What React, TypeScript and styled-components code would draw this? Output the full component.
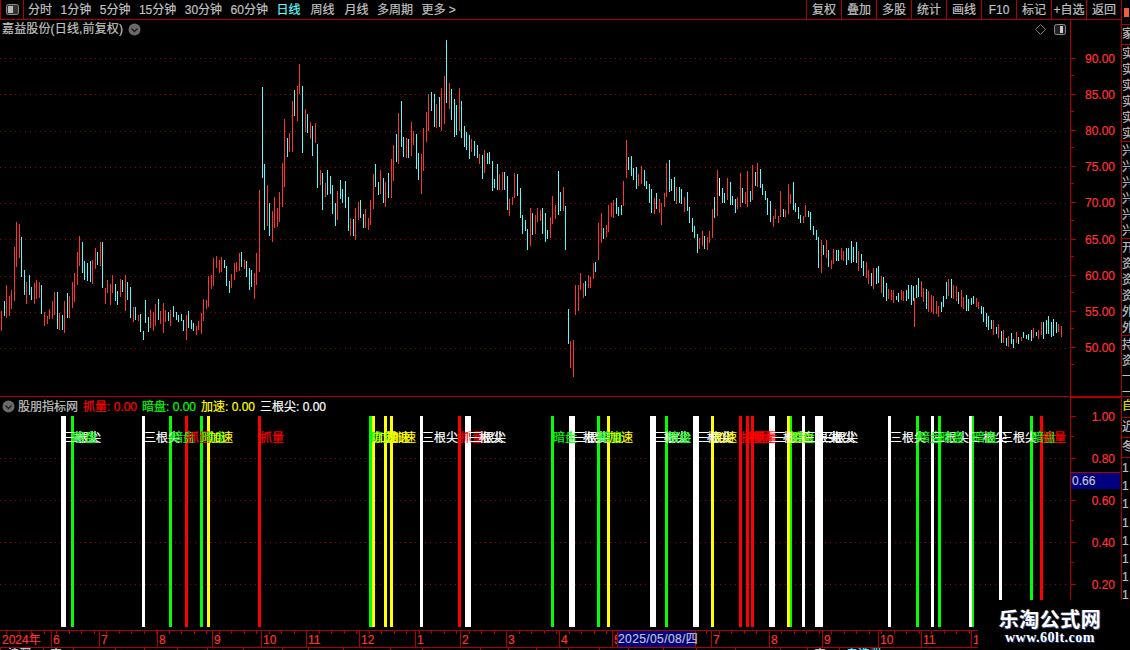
import React from "react";
import styled, { createGlobalStyle } from "styled-components";

const RED = "#ff3232";
const LINE = "#b00000";
const GRAY = "#c0c0c0";
const SANS = `"Liberation Sans", "Noto Sans CJK SC", sans-serif`;

const Global = createGlobalStyle`
  html, body { margin: 0; padding: 0; background: #000; overflow: hidden; }
  #root { width: 1130px; height: 650px; }
`;

const Z10 = "r4,303,363 c13,273,318 r19,225,324 r28,258,318 r34,240,297 r43,111,273 r49,36,171 r58,42,144 c64,81,201 c73,180,255 r79,216,282 c88,195,255 c94,231,270 r103,219,282 r109,210,267 r118,216,264 c124,225,312 r133,306,348 r142,318,342 r148,297,327 r157,273,327 r163,246,315 c172,246,357 r178,309,360 c187,315,360 r193,273,369 c202,249,324 r208,258,324 r217,216,294 r223,189,276 r232,126,225 r238,78,168 c247,96,189 c253,153,210 c262,159,213 c271,153,216 r277,150,222 r286,114,177 c292,126,165 r301,96,168 c307,96,234 r316,234,282 r322,210,249 r331,222,285 r337,195,249 c346,222,273 c352,243,285 r361,207,261 c367,210,246 r376,195,303 c382,216,270 c391,231,324 r400,291,336 c406,291,330 r415,315,333 c421,312,366 c430,363,390 c436,270,339 c445,321,366 r451,300,354 r460,306,363 r466,282,348 c475,267,330 r481,303,342 r490,279,369 r496,300,336 c505,306,333 r511,300,348 c520,288,321 c529,306,330 c535,315,336 c544,312,333 c550,330,363 r559,315,390 c565,303,354 c574,330,357 c580,339,363 r589,348,375 r595,333,360 r604,309,372 r610,267,333 r619,270,297 r625,198,291 r634,195,237 r640,144,228 r649,138,174 r658,150,189 r664,141,186 c673,150,174 c679,168,228 c688,213,249 r694,192,234 r703,159,210 r709,156,186 r718,129,183 c724,126,171 r733,150,177 c739,153,201 c748,174,240 c754,180,231 r763,189,267 r769,129,225 r778,-60,186";
const Z12 = "c22,156,429 c28,387,585 r37,450,573 c43,504,603 r52,528,621 r58,486,579 r67,519,576 r73,471,561 r82,384,516 r88,252,456 c97,309,366 r103,294,351 r112,198,351 c118,165,243 r127,153,258 r133,87,177 c142,153,354 r151,222,291 c157,237,294 r166,261,312 c172,273,363 r181,264,324 c187,327,459 r196,405,450 c202,414,525 r211,444,486 c217,405,480 c226,423,477 c232,450,537 c241,504,573 r247,468,555 c256,435,492 c262,462,504 c271,438,519 c280,486,588 r286,549,603 c295,552,603 r301,519,615 r310,501,555 c316,495,549 c325,537,579 r331,522,579 r340,549,585 r346,495,570 r355,417,522 c361,387,456 c370,441,480 r376,405,477 c385,429,504 r391,441,516 c400,414,489 r409,372,489 r415,330,438 c424,297,381 r430,234,387 c439,198,336 c445,306,366 r454,309,369 c460,312,369 r469,261,363 r475,288,330 c484,297,402 c490,354,435 r499,357,477 r505,279,408 r514,231,321 r520,177,288 c529,171,228 c538,177,276 r544,207,279 c553,186,276 r559,159,288 r568,123,267 c574,15,204 r583,144,222 c589,162,255 c598,192,306 c604,210,300 r613,159,288 c619,198,309 c628,273,336 c634,291,345 c643,300,372 r649,312,351 c658,318,363 c667,330,369 r673,357,387 c682,360,432 r688,345,414 c697,354,387 c703,351,387 c712,378,468 c718,432,459 c727,387,465 r733,417,465 r742,411,465 c748,411,465 c757,423,525 r763,492,543 r772,486,510 r778,414,489 c787,417,483 c796,459,549 c802,540,597 c811,555,588 c817,582,645 r826,519,633 c832,534,600 r841,540,597 r847,519,561 r856,525,558 c862,519,597 c871,534,621 c877,585,612 r886,546,609 r892,483,567 r901,510,552 c910,408,540 c916,471,528 r925,456,528";
const Z11 = "c76,228,360 c85,537,642 r91,633,714 r100,630,741 r106,465,555 r115,465,543 r121,429,480 r130,459,504 c136,453,498 r145,435,474 r151,441,474 r160,399,447 c166,396,426 r175,279,390 r184,249,339 c190,294,327 r199,285,321 r205,225,306 r214,219,261 r220,210,264 c229,204,252 c235,231,258 c244,225,255 r250,153,228 r259,30,144 c265,81,120 c274,78,138 c280,114,150 c289,111,177 r295,132,168 r304,108,162 c313,120,168 c319,153,177 c328,162,219 c334,177,249 r343,204,252 c349,189,237 r358,207,249 r364,219,285 r373,189,231 r379,99,201 c388,90,186 c394,147,183 c403,141,213 r409,171,222 c418,171,219 c424,177,222 r433,201,246 c442,186,243 c448,231,279 c457,264,306 c463,288,324 c472,312,369 r478,324,357 r487,303,348 c493,318,357 r502,321,360 r508,303,339 r517,237,324 c523,201,264 r532,120,258 w538,144,198 c547,174,219 c553,189,219 r562,144,210 c571,156,225 c577,198,225 c586,207,249 r592,201,237 r601,129,231 c607,174,219 r616,186,222 r622,123,231 c631,183,216 r637,105,210 c646,126,168 r652,99,171 c661,117,174 c667,162,195 c676,183,210 c682,204,255 c691,213,276 r700,258,291 r706,237,267 r715,258,279 r721,183,261 c730,237,261 r736,240,261 r745,162,252 r751,192,222 c760,156,240 c766,219,246 c775,231,267 c781,255,279 r790,258,279 r796,225,261 c805,243,261 c811,246,300 c820,288,315 c829,300,330 c835,321,414 r844,330,429 c850,345,375 r859,330,384 c865,360,411 r874,390,417 r880,357,402 c889,360,393 c895,360,393";

type Bar = { x: number; y: number; h: number; c: string };
const COLORS: Record<string, string> = { r: RED, c: "#54fcfc", w: "#ffffff" };
const SIGNAL_COLORS: Record<string, string> = { r: "#ff0000", g: "#00ff00", y: "#ffff00", w: "#ffffff" };

const parse = (src: string, ox: number, oy: number): Bar[] =>
  src.split(" ").map((t) => {
    const [x, a, b] = t.slice(1).split(",").map(Number);
    const y = Math.round(oy + a / 3);
    return { x: Math.floor(ox + x / 3), y, h: Math.max(1, Math.round(oy + b / 3) - y), c: COLORS[t[0]] };
  });

const TAIL_KEYS: [number, number, number][] = [
  [841, 248, 262], [855, 242, 265], [862, 258, 272], [870, 270, 288], [878, 266, 285], [885, 284, 298],
  [895, 293, 303], [905, 290, 300], [912, 284, 304], [920, 280, 298], [930, 295, 312], [940, 305, 317],
  [948, 278, 298], [955, 285, 300], [965, 297, 310], [975, 295, 306], [985, 310, 325], [995, 322, 335],
  [1005, 335, 345], [1015, 335, 345], [1025, 333, 340], [1035, 330, 338], [1047, 318, 335], [1055, 322, 335], [1063, 330, 337],
];

const tailBars = (): Bar[] => {
  const out: Bar[] = [];
  let seed = 17;
  const rnd = () => ((seed = (seed * 137 + 59) % 1009) / 1009);
  for (let i = 0; i < 89; i++) {
    const x = 841 + 2.5 * i;
    const k = TAIL_KEYS.findIndex((p) => p[0] > x);
    const b = TAIL_KEYS[Math.max(k, 1)];
    const a = TAIL_KEYS[Math.max(k, 1) - 1];
    const t = Math.min(1, (x - a[0]) / (b[0] - a[0]));
    const top = a[1] + (b[1] - a[1]) * t;
    const bot = a[2] + (b[2] - a[2]) * t;
    const y = Math.round(top + rnd() * 7 - 3);
    const e = Math.round(bot + rnd() * 7 - 4);
    out.push({ x: Math.floor(x), y, h: Math.max(4, e - y), c: rnd() > 0.6 ? RED : COLORS.c });
  }
  out.push({ x: 914, y: 298, h: 29, c: RED });
  return out;
};

const BARS: Bar[] = [...parse(Z10, 0, 210), ...parse(Z12, 255, 35), ...parse(Z11, 540, 130), ...tailBars()];

const GRID_MAIN = [58, 94, 131, 167, 203, 239, 276, 312, 348];
const GRID_SUB = [458, 500, 542, 584];

type Kind = "w" | "g" | "r" | "y";
const NAMES: Record<Kind, string> = { w: "三根尖", g: "暗盘", r: "抓量", y: "加速" };
const SIGNALS: [number, number, Kind][] = [
  [61, 5, "w"], [71, 3, "g"], [142, 3, "w"], [169, 3, "g"], [185, 3, "r"], [200, 3, "g"], [207, 3, "y"], [258, 3, "r"],
  [369, 3, "g"], [372, 3, "y"], [384, 3, "y"], [390, 3, "y"], [420, 3, "w"], [458, 3, "r"], [465, 6, "w"],
  [551, 3, "g"], [569, 6, "w"], [597, 3, "g"], [607, 3, "y"], [650, 6, "w"], [665, 3, "g"], [693, 6, "w"],
  [711, 3, "y"], [739, 3, "r"], [746, 3, "r"], [751, 3, "r"], [769, 6, "w"], [787, 3, "y"], [790, 2, "g"],
  [802, 3, "w"], [815, 8, "w"], [888, 3, "w"], [916, 3, "g"], [931, 3, "w"], [938, 3, "g"], [969, 3, "w"], [972, 2, "g"],
  [999, 3, "w"], [1030, 3, "g"], [1040, 3, "r"],
];
const LABELS = SIGNALS.flatMap(([x, w, k]) => {
  const list = [{ x: x + w - 1, k }];
  if (w >= 5) list.push({ x: x + w - 4, k });
  return list;
});

const Page = styled.div`
  display: flex; width: 1130px; height: 650px; background: #000; color: ${GRAY};
  font: 12px/14px ${SANS}; position: relative; overflow: hidden; -webkit-text-stroke: 0.2px;
`;
const Main = styled.div`display: flex; flex-direction: column; width: 1121px; flex: none;`;

const Toolbar = styled.div`display: flex; height: 20px; box-sizing: border-box; border-bottom: 1px solid ${LINE}; flex: none;`;
const LayoutBtn = styled.div`
  width: 24px; box-sizing: border-box; display: flex; align-items: center; justify-content: center;
  border-left: 1px solid ${LINE}; border-right: 1px solid ${LINE}; margin-right: 4px; flex: none;
`;
const Tabs = styled.div`display: flex; align-items: center; gap: 8.5px; line-height: 20px;`;
const Tab = styled.span<{ $active?: boolean; $wide?: boolean }>`
  color: ${(p) => (p.$active ? "#54fcfc" : GRAY)}; white-space: nowrap;
  margin-right: ${(p) => (p.$wide ? 1.5 : 0)}px;
`;
const Tools = styled.div`display: flex; margin-left: auto;`;
const Tool = styled.div`
  width: 35px; box-sizing: border-box; border-left: 1px solid ${LINE}; text-align: center;
  line-height: 20px; white-space: nowrap; overflow: hidden;
`;

const PricePane = styled.div`display: flex; height: 377px; box-sizing: border-box; border-bottom: 1px solid ${LINE}; flex: none;`;
const ChartCol = styled.div`width: 1070px; flex: none; display: flex; flex-direction: column;`;
const TitleRow = styled.div`height: 18px; display: flex; align-items: center; padding: 0 4px 0 2px; flex: none;`;
const Title = styled.span`margin-right: 5px; white-space: nowrap; letter-spacing: 0.15px;`;
const TitleTools = styled.div`display: flex; align-items: center; gap: 8px; margin-left: auto;`;
const Plot = styled.svg`display: block; flex: none;`;

const Axis = styled.div`
  width: 50px; flex: none; box-sizing: border-box; border-left: 1px solid ${LINE}; display: flex; flex-direction: column;
`;
const PriceAxis = styled(Axis)`padding-top: 20px;`;
const SubAxis = styled(Axis)`position: relative; box-shadow: inset 0 1px 0 ${LINE};`;
const SubRows = styled.div`margin-top: -2px;`;
const AxisRow = styled.div<{ $h: number }>`
  height: ${(p) => p.$h}px; box-sizing: border-box; display: flex; align-items: center; justify-content: flex-end;
  padding: 2px 5px 0 0; color: ${RED}; position: relative;
  &::before { content: ""; position: absolute; left: 0; top: 50%; width: 5px; height: 1px; background: ${LINE}; }
  &::after { content: ""; position: absolute; left: 0; bottom: 0; width: 3px; height: 1px; background: ${LINE}; }
`;
const Current = styled.div`
  position: absolute; left: 0; top: 75px; width: 49px; height: 17px; box-sizing: border-box;
  background: #000080; border-top: 1px solid ${LINE}; padding-left: 1px; line-height: 16px; color: ${GRAY};
`;

const SubPane = styled.div`display: flex; height: 233px; flex: none;`;
const SubHead = styled.div`height: 19px; display: flex; align-items: center; padding-left: 2px; flex: none; white-space: pre;`;
const HeadName = styled.span`margin: 0 6px 0 3px; width: 59px; white-space: nowrap;`;
const HeadValue = styled.span<{ $c: string; $w: number }>`color: ${(p) => p.$c}; width: ${(p) => p.$w}px; white-space: pre;`;
const SignalArea = styled.div`position: relative; height: 214px; flex: none; overflow: hidden;`;
const SignalLabel = styled.span<{ $c: string }>`
  position: absolute; top: 15px; color: ${(p) => p.$c}; line-height: 14px; white-space: nowrap;
`;

const TimeAxis = styled.div`
  display: flex; height: 16px; flex: none; border-top: 1px solid ${LINE}; border-bottom: 1px solid ${LINE};
  position: relative; color: ${RED};
  background: repeating-linear-gradient(90deg, ${LINE} 0 1px, transparent 1px 12.5px) 6px 0 / 100% 3px no-repeat;
`;
const TimeCell = styled.div<{ $w: number; $first?: boolean }>`
  width: ${(p) => p.$w}px; flex: none; box-sizing: border-box; line-height: 16px; padding: 1px 0 0 ${(p) => (p.$first ? 2 : 1)}px;
  border-left: ${(p) => (p.$first ? "none" : `1px solid ${LINE}`)}; white-space: nowrap; overflow: hidden;
`;
const DateTip = styled.div`
  position: absolute; left: 617px; top: 0; width: 79px; height: 16px; box-sizing: border-box; background: #000080;
  border-left: 1px solid ${LINE}; border-right: 1px solid ${LINE}; color: ${GRAY}; text-align: center; line-height: 16px;
  white-space: nowrap; letter-spacing: 0.4px;
`;
const BottomStrip = styled.div`display: flex; height: 3px; flex: none; overflow: hidden;`;
const StripCell = styled.div<{ $w: number; $c?: string }>`
  width: ${(p) => p.$w}px; flex: none; box-sizing: border-box; border-left: 1px solid ${LINE}; padding-left: 6px;
  color: ${(p) => p.$c || "#ddd"}; line-height: 12px; white-space: nowrap;
`;

const Side = styled.div`
  width: 9px; flex: none; box-sizing: border-box; border-left: 1px solid ${LINE}; overflow: hidden; display: flex; flex-direction: column;
`;
const SideCell = styled.div<{ $h: number; $c?: string; $open?: boolean }>`
  height: ${(p) => p.$h}px; flex: none; box-sizing: border-box; overflow: hidden; color: ${(p) => p.$c || GRAY};
  border-bottom: ${(p) => (p.$open ? "none" : `1px solid ${LINE}`)}; line-height: 16px; width: 14px; padding-top: 1px;
`;
const SideTop = styled.div`height: 25px; flex: none; box-sizing: border-box; border-bottom: 1px solid ${LINE}; padding: 8px 0 0 2px;`;
const SideMark = styled.div`width: 5px; height: 9px; background: #f06040;`;
const SideChar = styled.div`width: 12px; height: 16px;`;
const SideDigit = styled.div`height: 18.2px; line-height: 18px; color: ${GRAY};`;

const Watermark = styled.div`
  position: absolute; left: 978px; top: 600px; width: 152px; height: 50px; background: #000;
  display: flex; flex-direction: column; align-items: center; padding: 7px 8px 0 0; box-sizing: border-box; color: #fff;
  -webkit-text-stroke: 0;
`;
const WmTitle = styled.div`
  font: 700 20px/24px "Noto Sans CJK SC", sans-serif; letter-spacing: 0.5px; white-space: nowrap;
  text-shadow: 1px 1px 0 #2a4a90, -1px 0 0 #5a3010;
`;
const WmUrl = styled.div`
  font: 700 14px/14px "Liberation Serif", serif; letter-spacing: 0.5px; white-space: nowrap;
  text-shadow: 1px 1px 0 #1a3a90;
`;

const Chevron = () => (
  <svg width="13" height="13" viewBox="0 0 13 13" style={{ flex: "none" }}>
    <circle cx="6.5" cy="6.5" r="6" fill="#6a6a6a" />
    <path d="M3.5 5.5 L6.5 8.5 L9.5 5.5" fill="none" stroke="#1c1c1c" strokeWidth="1.4" />
  </svg>
);

const GridLines = ({ rows }: { rows: number[] }) => (
  <>
    {rows.map((y) => (
      <line key={y} x1="0" x2="1070" y1={y + 0.5} y2={y + 0.5} stroke="#a00000" strokeDasharray="1 4" />
    ))}
  </>
);

const TABS = ["分时", "1分钟", "5分钟", "15分钟", "30分钟", "60分钟", "日线", "周线", "月线", "多周期"];
const TOOLS = ["复权", "叠加", "多股", "统计", "画线", "F10", "标记", "+自选", "返回"];
const PRICES = ["90.00", "85.00", "80.00", "75.00", "70.00", "65.00", "60.00", "55.00", "50.00"];
const SUBS = ["1.00", "0.80", "0.60", "0.40", "0.20"];
const MONTHS: [number, string][] = [
  [0, "2024年"], [51, "6"], [99, "7"], [157, "8"], [212, "9"], [261, "10"], [306, "11"], [359, "12"],
  [415, "1"], [460, "2"], [506, "3"], [559, "4"], [612, "5"], [711, "7"], [769, "8"], [822, "9"], [878, "10"], [921, "11"], [971, "1"], [1000, ""],
];
const STRIP: [number, string, string?][] = [
  [0, "沪深"], [43, "  中"], [73, ""], [115, ""], [144, ""], [177, ""], [207, ""], [243, ""], [282, ""], [308, ""], [343, ""],
  [390, ""], [422, ""], [480, ""], [508, ""], [536, ""], [568, ""], [599, ""], [628, ""], [663, ""], [696, ""], [735, ""], [780, ""],
  [807, "  中"], [839, "自选股", "#54fcfc"], [871, ""], [1121, ""],
];
const SIDE_GROUPS: [number, string[]][] = [
  [20, ["家"]],
  [97, ["实", "实", "实", "实", "实", "实"]],
  [97, ["兴", "兴", "兴", "兴", "兴", "兴"]],
  [97, ["开", "资", "资", "资", "外", "外"]],
  [61, ["持", "资", "一", "一"]],
];

export default function App() {
  return (
    <Page>
      <Global />
      <Main>
        <Toolbar>
          <LayoutBtn>
            <svg width="13" height="11" viewBox="0 0 13 11">
              <rect x="0.5" y="0.5" width="12" height="10" rx="2" fill="#333" stroke="#8a8a8a" />
              <rect x="2" y="2" width="5" height="7" fill="#b8b8b8" />
            </svg>
          </LayoutBtn>
          <Tabs>
            {TABS.map((t) => (
              <Tab key={t} $active={t === "日线"} $wide={t === "日线" || t === "周线"}>{t}</Tab>
            ))}
            <Tab>更多 &gt;</Tab>
          </Tabs>
          <Tools>
            {TOOLS.map((t) => (
              <Tool key={t}>{t}</Tool>
            ))}
          </Tools>
        </Toolbar>

        <PricePane>
          <ChartCol>
            <TitleRow>
              <Title>嘉益股份(日线,前复权)</Title>
              <Chevron />
              <TitleTools>
                <svg width="11" height="11" viewBox="0 0 11 11">
                  <path d="M5.5 0.5 L10.5 5.5 L5.5 10.5 L0.5 5.5 Z" fill="none" stroke="#777" />
                </svg>
                <svg width="12" height="11" viewBox="0 0 12 11">
                  <rect x="0.5" y="0.5" width="11" height="10" rx="2" fill="#222" stroke="#8a8a8a" />
                  <rect x="6" y="2" width="3" height="7" fill="#c8c8c8" />
                </svg>
              </TitleTools>
            </TitleRow>
            <Plot width="1070" height="358" viewBox="0 38 1070 358">
              <GridLines rows={GRID_MAIN} />
              {BARS.map((b, i) => (
                <rect key={i} x={b.x} y={b.y} width="1" height={b.h} fill={b.c} shapeRendering="crispEdges" />
              ))}
            </Plot>
          </ChartCol>
          <PriceAxis>
            {PRICES.map((p) => (
              <AxisRow key={p} $h={36.12}>{p}</AxisRow>
            ))}
          </PriceAxis>
        </PricePane>

        <SubPane>
          <ChartCol>
            <SubHead>
              <Chevron />
              <HeadName>股朋指标网</HeadName>
              <HeadValue $c="#ff0000" $w={59}>抓量: 0.00</HeadValue>
              <HeadValue $c="#00ff00" $w={59}>暗盘: 0.00</HeadValue>
              <HeadValue $c="#ffff00" $w={59}>加速: 0.00</HeadValue>
              <HeadValue $c="#ffffff" $w={80}>三根尖: 0.00</HeadValue>
            </SubHead>
            <SignalArea>
              <Plot width="1070" height="214" viewBox="0 416 1070 214">
                <GridLines rows={GRID_SUB} />
                {SIGNALS.map(([x, w, k]) => (
                  <rect key={`${x}${k}`} x={x} y="416" width={w} height="211" fill={SIGNAL_COLORS[k]} shapeRendering="crispEdges" />
                ))}
              </Plot>
              {LABELS.map((l, i) => (
                <SignalLabel key={i} $c={SIGNAL_COLORS[l.k]} style={{ left: l.x }}>{NAMES[l.k]}</SignalLabel>
              ))}
            </SignalArea>
          </ChartCol>
          <SubAxis>
            <SubRows>
              {SUBS.map((s) => (
                <AxisRow key={s} $h={42}>{s}</AxisRow>
              ))}
            </SubRows>
            <Current>0.66</Current>
          </SubAxis>
        </SubPane>

        <TimeAxis>
          {MONTHS.slice(0, -1).map(([x, m], i) => (
            <TimeCell key={x} $first={i === 0} $w={MONTHS[i + 1][0] - x}>{m}</TimeCell>
          ))}
          <DateTip>2025/05/08/四</DateTip>
        </TimeAxis>
        <BottomStrip>
          {STRIP.slice(0, -1).map(([x, t, c], i) => (
            <StripCell key={x} $w={STRIP[i + 1][0] - x} $c={c}>{t}</StripCell>
          ))}
        </BottomStrip>
      </Main>

      <Side>
        <SideTop><SideMark /></SideTop>
        {SIDE_GROUPS.map(([h, chars], i) => (
          <SideCell key={i} $h={h}>
            {chars.map((c, j) => (
              <SideChar key={j}>{c}</SideChar>
            ))}
          </SideCell>
        ))}
        <SideCell $h={21} $c="#e0e000">自</SideCell>
        <SideCell $h={20}>近</SideCell>
        <SideCell $h={20}>冬</SideCell>
        <SideCell $h={150} $open>
          {[0, 1, 2, 3, 4, 5, 6, 7].map((n) => (
            <SideDigit key={n}>1</SideDigit>
          ))}
        </SideCell>
      </Side>

      <Watermark>
        <WmTitle>乐淘公式网</WmTitle>
        <WmUrl>www.60lt.com</WmUrl>
      </Watermark>
    </Page>
  );
}
